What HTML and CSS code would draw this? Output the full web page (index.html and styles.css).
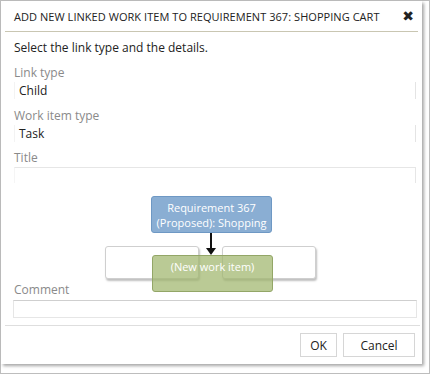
FILE: index.html
```html
<!DOCTYPE html>
<html>
<head>
<meta charset="utf-8">
<link rel="stylesheet" href="styles.css">
</head>
<body>
<div class="frame">
  <div class="dialog">
    <div class="header">
      <span class="title">ADD NEW LINKED WORK ITEM TO REQUIREMENT 367: SHOPPING CART</span>
      <span class="close">&#x2716;</span>
    </div>
    <div class="body">
      <p class="intro">Select the link type and the details.</p>
      <div class="label">Link type</div>
      <div class="select">Child</div>
      <div class="label">Work item type</div>
      <div class="select">Task</div>
      <div class="label title-label">Title</div>
      <div class="input title-input"></div>
      <div class="diagram">
        <div class="node blank left"></div>
        <div class="node blank right"></div>
        <div class="node parent">Requirement 367<br>(Proposed): Shopping</div>
        <div class="arrow"></div>
        <div class="node child">(New work item)</div>
      </div>
      <div class="label comment-label">Comment</div>
      <div class="input comment"></div>
    </div>
    <div class="footer">
      <button class="btn ok">OK</button>
      <button class="btn cancel">Cancel</button>
    </div>
  </div>
</div>
</body>
</html>
```

FILE: styles.css
```css
* { box-sizing: border-box; }
html, body { margin: 0; padding: 0; background: #fff; }
body {
  font-family: "Open Sans", "Noto Sans", sans-serif;
  color: #222;
}
.frame {
  width: 430px;
  height: 374px;
  border: 1px solid #bdbdbd;
  background: #fff;
}
.dialog {
  width: 421px;
  height: 363px;
  background: #fff;
  box-shadow: 2px 2px 3px rgba(0,0,0,0.35);
  display: flex;
  flex-direction: column;
}
.header {
  margin: 0 4px;
  height: 31px;
  border-bottom: 1px solid #c9c6b2;
  display: flex;
  align-items: center;
  justify-content: space-between;
  padding: 0 4px 0 9px;
}
.title {
  font-size: 11px;
  letter-spacing: 0.05px;
  color: #222;
  padding-top: 1px;
}
.close {
  font-size: 14px;
  line-height: 14px;
  color: #222;
  font-family: "DejaVu Sans", sans-serif;
}
.body {
  padding: 0 6px 0 13px;
  flex: 1;
}
.intro {
  margin: 8px 0 0;
  font-size: 12px;
  line-height: 16px;
  color: #222;
}
.label {
  font-size: 12px;
  line-height: 16px;
  color: #8a8a8a;
  margin-top: 9px;
}
.title-label { margin-top: 8px; }
.select {
  height: 17px;
  margin-top: 1px;
  border-left: 1px solid #f3f3f3;
  border-right: 1px solid #e4e4e4;
  font-size: 12px;
  line-height: 17px;
  padding-left: 4px;
  color: #222;
}
.input {
  border: 1px solid #e6e6e6;
}
.title-input {
  margin-top: 1px;
  height: 16px;
  border-bottom: none;
  border-left-color: #f5f5f5;
}
.diagram {
  position: relative;
  height: 99px;
}
.node {
  position: absolute;
  border-radius: 3px;
  font-size: 11px;
  line-height: 15px;
  color: #fff;
  text-align: center;
}
.blank {
  top: 63px;
  width: 94px;
  height: 33px;
  background: #fff;
  border: 1px solid #cfcfcf;
  box-shadow: 1px 2px 2px rgba(0,0,0,0.25);
}
.blank.left { left: 91px; }
.blank.right { left: 208px; }
.parent {
  left: 137px;
  top: 13px;
  width: 121px;
  height: 37px;
  background: #8aaed3;
  border: 1px solid #6e98c4;
  padding-top: 3px;
}
.arrow {
  position: absolute;
  left: 196px;
  top: 50px;
  width: 2px;
  height: 17px;
  background: #111;
}
.arrow::after {
  content: "";
  position: absolute;
  left: -4px;
  top: 15px;
  border-left: 5px solid transparent;
  border-right: 5px solid transparent;
  border-top: 7px solid #111;
}
.child {
  left: 138px;
  top: 72px;
  width: 121px;
  height: 37px;
  background: rgba(160, 182, 108, 0.72);
  border: 1px solid #93a667;
  padding-top: 3px;
}
.comment-label { margin-top: 0; }
.comment {
  margin-top: 2px;
  height: 18px;
  border-top-color: #cfcfcf;
  margin-left: -1px;
  margin-right: -1px;
}
.footer {
  margin: 0 2px 0 4px;
  border-top: 1px solid #dedede;
  height: 39px;
  display: flex;
  justify-content: flex-end;
  align-items: flex-start;
  gap: 6px;
  padding: 7px 5px 0 0;
}
.btn {
  font-family: "Open Sans", "Noto Sans", sans-serif;
  font-size: 12px;
  color: #222;
  background: #fff;
  border: 1px solid #d6d6d6;
  height: 24px;
  padding: 0;
  border-radius: 0;
}
.ok { width: 37px; }
.cancel { width: 72px; }
```
